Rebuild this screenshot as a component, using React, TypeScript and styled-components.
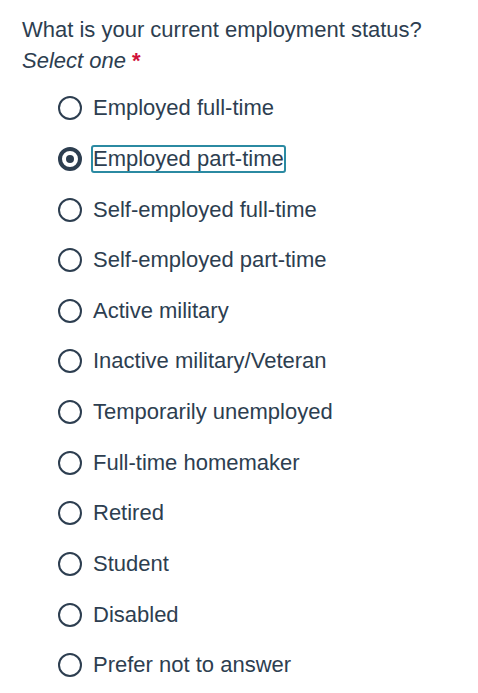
import React, { useState } from 'react';
import styled, { createGlobalStyle } from 'styled-components';

const GlobalStyle = createGlobalStyle`
  html, body {
    margin: 0;
    padding: 0;
    background: #ffffff;
  }
  body {
    font-family: "Liberation Sans", Arial, sans-serif;
    color: #2d3e50;
  }
`;

const Question = styled.div`
  padding: 14px 22px 0 22px;
`;

const Prompt = styled.div`
  font-size: 22px;
  line-height: 31px;
  color: #2d3e50;
`;

const Hint = styled.span`
  display: block;
  font-style: italic;
`;

const Required = styled.span`
  color: #d0103a;
  font-style: normal;
  font-weight: bold;
  margin-left: 6px;
`;

const Options = styled.div`
  display: flex;
  flex-direction: column;
  padding: 7px 0 0 36px;
`;

const Option = styled.label`
  display: flex;
  align-items: center;
  height: 50.64px;
  cursor: pointer;
`;

const Radio = styled.span<{ $checked: boolean }>`
  flex: none;
  box-sizing: border-box;
  width: 24px;
  height: 24px;
  border-radius: 50%;
  border: ${p => (p.$checked ? '4px' : '2px')} solid #2d3e50;
  display: flex;
  align-items: center;
  justify-content: center;
  margin-right: 10px;

  &::after {
    content: '';
    display: ${p => (p.$checked ? 'block' : 'none')};
    width: 8px;
    height: 8px;
    border-radius: 50%;
    background: #2d3e50;
  }
`;

const HiddenInput = styled.input`
  position: absolute;
  opacity: 0;
  width: 0;
  height: 0;
  margin: 0;
`;

const Text = styled.span<{ $focused: boolean }>`
  font-size: 22px;
  line-height: 24px;
  padding: 0;
  margin-left: -1px;
  border: 2px solid ${p => (p.$focused ? '#2b8aa2' : 'transparent')};
  border-radius: 3px;
  color: #2d3e50;
`;

const choices = [
  'Employed full-time',
  'Employed part-time',
  'Self-employed full-time',
  'Self-employed part-time',
  'Active military',
  'Inactive military/Veteran',
  'Temporarily unemployed',
  'Full-time homemaker',
  'Retired',
  'Student',
  'Disabled',
  'Prefer not to answer',
];

export default function App() {
  const [value, setValue] = useState('Employed part-time');

  return (
    <>
      <GlobalStyle />
      <Question role="radiogroup" aria-labelledby="employment-q">
        <Prompt id="employment-q">
          What is your current employment status?
          <Hint>
            Select one<Required>*</Required>
          </Hint>
        </Prompt>
        <Options>
          {choices.map(c => (
            <Option key={c}>
              <HiddenInput
                type="radio"
                name="employment"
                checked={value === c}
                onChange={() => setValue(c)}
              />
              <Radio $checked={value === c} />
              <Text $focused={value === c}>{c}</Text>
            </Option>
          ))}
        </Options>
      </Question>
    </>
  );
}
